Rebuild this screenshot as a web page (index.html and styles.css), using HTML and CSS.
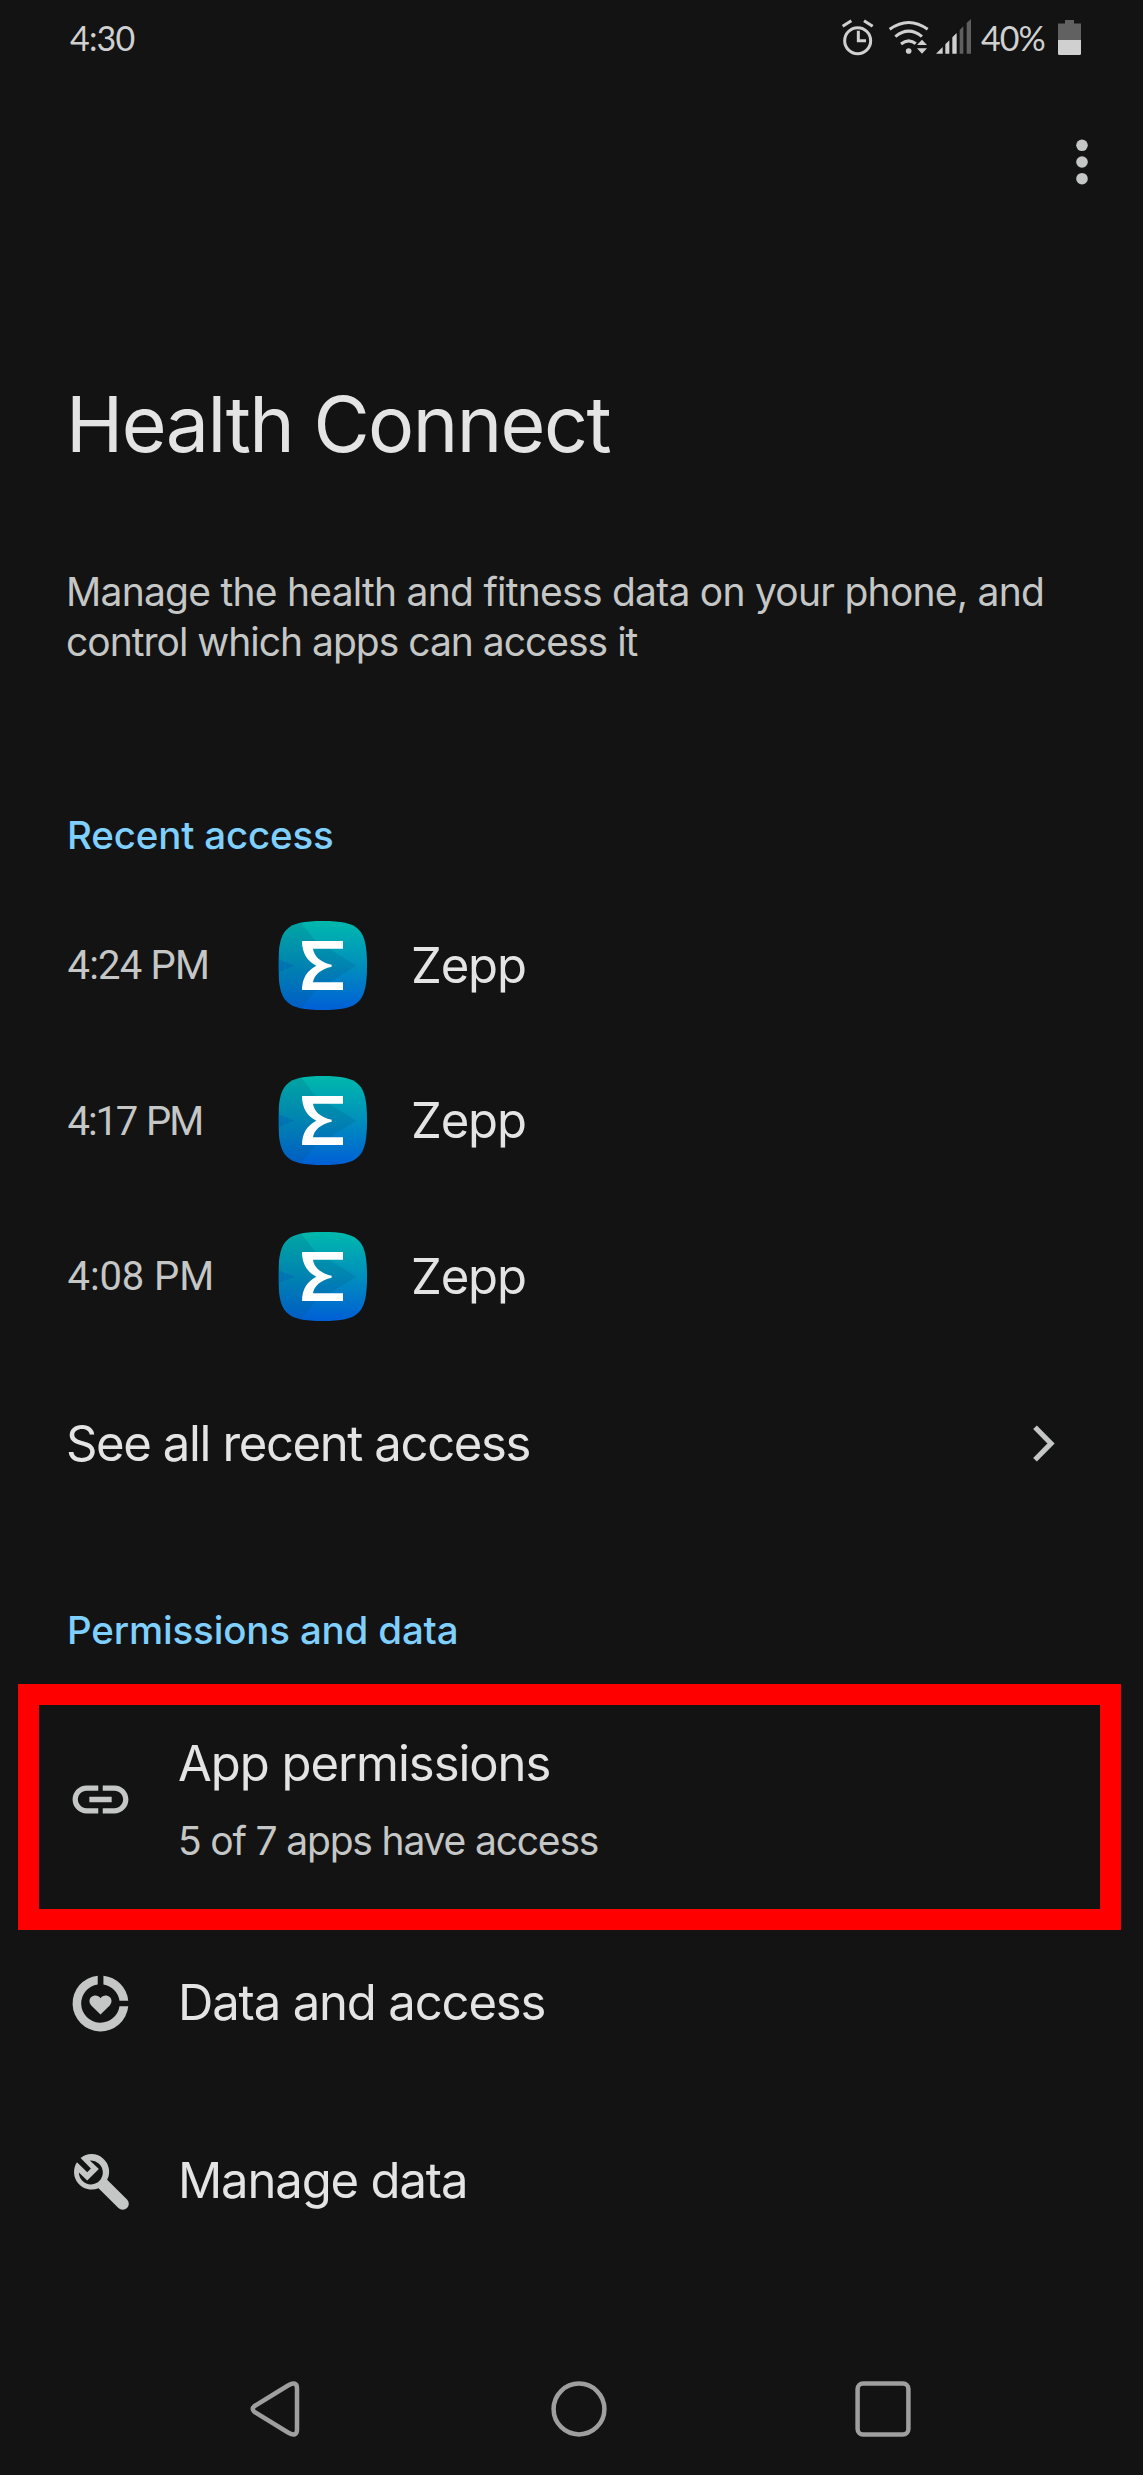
FILE: index.html
```html
<!DOCTYPE html>
<html lang="en">
<head>
<meta charset="utf-8">
<title>Health Connect</title>
<link rel="stylesheet" href="styles.css">
</head>
<body>
<svg class="defs" width="0" height="0" aria-hidden="true">
  <defs>
    <linearGradient id="zepp-fill" x1="0" y1="0" x2="0" y2="1">
      <stop offset="0" stop-color="#00b9ac"/>
      <stop offset=".5" stop-color="#008fbd"/>
      <stop offset="1" stop-color="#005fd6"/>
    </linearGradient>
    <clipPath id="zepp-clip"><path d="M146 15C256 15 279 38 279 148.500S256 282 146 282 13 259 13 148.500 36 15 146 15Z"/></clipPath>
    <symbol id="zepp" viewBox="0 0 294 294">
      <g clip-path="url(#zepp-clip)">
        <rect x="13" y="15" width="266" height="267" fill="url(#zepp-fill)"/>
        <path d="M13 15H78L122 72 247 149 122 226 78 282H13Z" fill="#004f78" opacity=".17"/>
        <path d="M13 130L62 149 13 168Z" fill="#005bb5" opacity=".35"/>
      </g>
      <path d="M84 75H207V98H117C120 120 139 139 173 146V152C139 159 120 178 117 199H207V222H84C84 187 99 163 127 149 99 135 84 110 84 75Z" fill="#fff"/>
    </symbol>
  </defs>
</svg>

<header class="status">
  <span class="status-text clock">4:30</span>
  <div class="status-right">
    <svg class="status-icons" viewBox="0 0 420 150">
      <g fill="none" stroke="#d0d0d0" stroke-width="9">
        <circle cx="65" cy="92" r="39"/>
        <path d="M67 62V92H90M20 49L46 32M84 32L110 49"/>
        <path d="M161 58Q218 17 275 58M178 80Q218 47 258 80M195 102Q218 83 241 102"/>
      </g>
      <circle cx="218" cy="123" r="8.500" fill="#d0d0d0"/>
      <path d="M258 80L280 104V117L258 138 236 117V104Z" fill="#131313"/>
      <path d="M243 105L258 89 273 105ZM243 115H273L258 131Z" fill="#d0d0d0"/>
      <path d="M300 131L320 111V131ZM328 131V103L340 91V131ZM349 131V82L362 69V131Z" fill="#d0d0d0"/>
      <path d="M371 131V60L382 49V131ZM392 131V39L405 27V131Z" fill="#5f5f5f"/>
    </svg>
    <span class="status-text percent">40%</span>
    <svg class="battery" viewBox="0 0 23 35">
      <path d="M7 0H16V3.500H23V20H0V3.500H7Z" fill="#616161"/>
      <path d="M0 20H23V33.500Q23 35 21.500 35H1.500Q0 35 0 33.500Z" fill="#d0d0d0"/>
    </svg>
  </div>
</header>

<div class="toolbar">
  <svg class="more" viewBox="0 0 12 46" fill="#c5c7c6"><circle cx="6" cy="6.300" r="5.800"/><circle cx="6" cy="23" r="5.800"/><circle cx="6" cy="39.700" r="5.800"/></svg>
</div>

<main>
  <h1 class="title">Health Connect</h1>
  <p class="desc">Manage the health and fitness data on your phone, and<br><span class="desc-tail">control which apps can access it</span></p>

  <h2 class="heading recent">Recent access</h2>
  <ul class="access-list">
    <li class="access"><span class="time">4:24 PM</span><svg class="app-icon"><use href="#zepp"/></svg><span class="app-name">Zepp</span></li>
    <li class="access"><span class="time narrow">4:17 PM</span><svg class="app-icon"><use href="#zepp"/></svg><span class="app-name">Zepp</span></li>
    <li class="access"><span class="time wide">4:08 PM</span><svg class="app-icon"><use href="#zepp"/></svg><span class="app-name">Zepp</span></li>
  </ul>
  <div class="see-all">
    <span class="item-title see-all-text">See all recent access</span>
    <svg class="chevron" viewBox="0 0 22 37"><path d="M2 2.200L18 18.500 2 34.800" fill="none" stroke="#c5c7c6" stroke-width="5.200"/></svg>
  </div>

  <h2 class="heading permissions">Permissions and data</h2>
  <div class="highlight">
    <svg class="icon" viewBox="0 0 24 24"><path d="M3.900 12c0-1.710 1.390-3.100 3.100-3.100h4.200V7H7c-2.760 0-5 2.240-5 5s2.240 5 5 5h4.200v-1.900H7c-1.710 0-3.100-1.390-3.100-3.100zM8 13h8v-2H8v2zm9-6h-4.200v1.900H17c1.710 0 3.100 1.390 3.100 3.100s-1.390 3.100-3.100 3.100h-4.200V17H17c2.760 0 5-2.240 5-5s-2.240-5-5-5z"/></svg>
    <div class="item-text">
      <span class="item-title">App permissions</span>
      <span class="item-sub">5 of 7 apps have access</span>
    </div>
  </div>
  <div class="item data">
    <svg class="icon" viewBox="0 0 24 24"><path d="M13.050 2.050A10 10 0 0 1 21.950 11H18.800A6.900 6.900 0 0 0 13.050 5.150ZM11 2.050A10 10 0 1 0 21.950 13H18.800A6.900 6.900 0 1 1 11 5.150Z"/><path d="M12 15.900L8.700 12.700C7.800 11.700 7.900 10.500 8.600 9.800 9.600 8.800 11.200 8.900 12 10.100 12.800 8.900 14.400 8.800 15.400 9.800 16.100 10.500 16.200 11.700 15.300 12.700Z"/></svg>
    <span class="item-title data-title">Data and access</span>
  </div>
  <div class="item manage">
    <svg class="icon" viewBox="1 3 202 202"><path fill-rule="evenodd" d="M42 33A53 53 0 0 1 122 99L182 158A17 17 0 0 1 156 184L96 124A53 53 0 0 1 31 46L62 76 73 65ZM70 41L97 66 62 101 37 77A36 36 0 1 0 70 41Z"/></svg>
    <span class="item-title manage-title">Manage data</span>
  </div>
</main>

<nav class="nav">
  <svg viewBox="0 0 56 56"><path d="M7.500 25L41 4.500Q50 -.5 50 7.500V48.500Q50 56.500 41 51.500L7.500 31Q4 28 7.500 25Z"/></svg>
  <svg viewBox="0 0 56 56"><circle cx="28" cy="28" r="25.400"/></svg>
  <svg viewBox="0 0 56 56"><rect x="2.600" y="2.600" width="50.800" height="50.800" rx="5.500"/></svg>
</nav>
</body>
</html>
```
FILE: styles.css
```css
* { box-sizing: border-box; }

body {
  margin: 0;
  width: 1143px;
  height: 2475px;
  overflow: hidden;
  background: #131313;
  color: #e4e4e4;
  font-family: Inter, "Open Sans", sans-serif;
  display: flex;
  flex-direction: column;
}

h1, h2, p, ul { margin: 0; padding: 0; font-weight: 400; }
svg { display: block; flex: none; }
.defs { position: absolute; }

/* Status bar */
.status {
  height: 76px;
  padding: 0 62px 0 70px;
  display: flex;
  align-items: center;
  justify-content: space-between;
}
.status-text { font: 34px/40px Lato, sans-serif; color: #d0d0d0; white-space: nowrap; }
.clock { letter-spacing: -.8px; }
.percent { width: 77px; letter-spacing: -1px; }
.status-right { display: flex; align-items: center; }
.status-icons { width: 140px; height: 50px; margin: -6px 5px 0 0; }
.battery { width: 23px; height: 35px; }

.toolbar {
  height: 172px;
  padding-right: 55px;
  display: flex;
  align-items: center;
  justify-content: flex-end;
}
.more { width: 12px; height: 46px; }

/* Page text */
.title {
  margin: 126px 0 0 66px;
  font-size: 77px;
  line-height: 100px;
  letter-spacing: -1.550px;
  white-space: nowrap;
}
.desc {
  margin: 93px 0 0 66px;
  font-size: 39px;
  line-height: 50px;
  letter-spacing: -.750px;
  color: #c5c7c6;
  white-space: nowrap;
}
.desc-tail { letter-spacing: -1px; }
.heading {
  margin-left: 67px;
  font-size: 38.500px;
  line-height: 50px;
  font-weight: 500;
  letter-spacing: -.170px;
  color: #7fcfff;
}
.recent { margin-top: 143px; }
.permissions { margin-top: 112px; }

/* Recent access */
.access-list { margin-top: 27.500px; list-style: none; }
.access {
  height: 155.500px;
  padding-left: 67.500px;
  display: flex;
  align-items: center;
}
.time {
  width: 206.500px;
  padding-top: 3px;
  font: 40px/50px Roboto, sans-serif;
  letter-spacing: -.800px;
  color: #c5c7c6;
}
.time.narrow { letter-spacing: -2.100px; word-spacing: 2px; }
.time.wide { letter-spacing: -.100px; }
.app-icon { width: 98px; height: 98px; }
.app-name {
  margin-left: 39px;
  padding-top: 2px;
  font-size: 49px;
  line-height: 60px;
  letter-spacing: -1.130px;
}
.see-all {
  height: 100px;
  margin-top: 39.500px;
  padding: 0 88px 0 66px;
  display: flex;
  align-items: center;
  justify-content: space-between;
}
.chevron { width: 22px; height: 37px; }

/* Permissions and data */
.highlight {
  margin: 29px 22px 0 18px;
  height: 246px;
  padding: 28px 0 43px 28px;
  border: 21px solid #f00;
  display: flex;
  align-items: center;
  gap: 44px;
}
.icon { width: 67px; height: 67px; fill: #c5c7c6; }
.highlight .icon { margin-top: -1px; }
.item-text { display: flex; flex-direction: column; gap: 22px; }
.item-title {
  font-size: 49px;
  line-height: 60px;
  letter-spacing: -1.040px;
  white-space: nowrap;
}
.item-sub {
  font-size: 39px;
  line-height: 50px;
  letter-spacing: -1.180px;
  color: #c5c7c6;
}
.item {
  height: 120px;
  padding-left: 67px;
  display: flex;
  align-items: center;
  gap: 44px;
}
.data { margin-top: 13px; }
.manage { margin-top: 58px; }
.item-title.see-all-text { padding-top: 1px; letter-spacing: -1.370px; }
.item-title.data-title { letter-spacing: -1.150px; }
.item-title.manage-title { letter-spacing: -1.150px; }

/* System navigation */
.nav {
  margin-top: 101px;
  height: 133px;
  padding-left: 123px;
  display: grid;
  grid-template-columns: repeat(3, 304px);
  align-items: center;
  justify-items: center;
}
.nav svg { width: 56px; height: 56px; fill: none; stroke: #9f9f9f; stroke-width: 4.500px; overflow: visible; }
```
